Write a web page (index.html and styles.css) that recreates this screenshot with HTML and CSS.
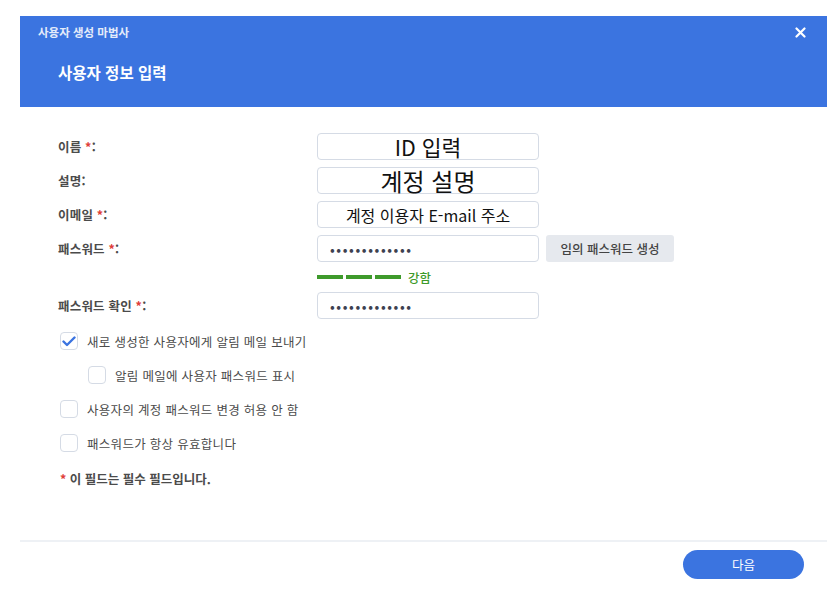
FILE: index.html
```html
<!DOCTYPE html>
<html lang="ko">
<head>
    <meta charset="UTF-8">
    <meta name="viewport" content="width=device-width, initial-scale=1.0">
    <title>사용자 생성 마법사</title>
    <link rel="stylesheet" href="styles.css">
</head>
<body>
    <div class="dialog">

        <div class="header">
            <div class="title-bar">
                <span class="title">사용자 생성 마법사</span>
                <span class="close">
                    <svg width="11" height="11" viewBox="0 0 11 11">
                        <path d="M1.5 1.5 L9.5 9.5 M9.5 1.5 L1.5 9.5" stroke="#fff" stroke-width="2.2" stroke-linecap="round"/>
                    </svg>
                </span>
            </div>
            <h2 class="step">사용자 정보 입력</h2>
        </div>

        <div class="body">
            <div class="row">
                <label>이름 <span class="req">*</span>:</label>
                <div class="field big">ID 입력</div>
            </div>
            <div class="row">
                <label>설명:</label>
                <div class="field bigger">계정 설명</div>
            </div>
            <div class="row">
                <label>이메일 <span class="req">*</span>:</label>
                <div class="field mid">계정 이용자 E-mail 주소</div>
            </div>
            <div class="row">
                <label>패스워드 <span class="req">*</span>:</label>
                <div class="field pw">•••••••••••••</div>
                <button class="gen">임의 패스워드 생성</button>
            </div>
            <div class="strength">
                <span class="seg"></span><span class="seg"></span><span class="seg"></span>
                <span class="strong">강함</span>
            </div>
            <div class="row">
                <label>패스워드 확인 <span class="req">*</span>:</label>
                <div class="field pw">•••••••••••••</div>
            </div>

            <div class="checks">
                <div class="check">
                    <span class="box checked">
                        <svg width="14" height="11" viewBox="0 0 14 11">
                            <path d="M1.5 5.5 L5 9 L12.5 1.5" fill="none" stroke="#3b74e0" stroke-width="2.4" stroke-linecap="round" stroke-linejoin="round"/>
                        </svg>
                    </span>
                    <span>새로 생성한 사용자에게 알림 메일 보내기</span>
                </div>
                <div class="check sub">
                    <span class="box"></span>
                    <span>알림 메일에 사용자 패스워드 표시</span>
                </div>
                <div class="check">
                    <span class="box"></span>
                    <span>사용자의 계정 패스워드 변경 허용 안 함</span>
                </div>
                <div class="check">
                    <span class="box"></span>
                    <span>패스워드가 항상 유효합니다</span>
                </div>
            </div>

            <p class="note"><span class="req">*</span> 이 필드는 필수 필드입니다.</p>
        </div>

        <div class="footer">
            <button class="next">다음</button>
        </div>
    </div>
</body>
</html>
```

FILE: styles.css
```css
body {
    margin: 0;
    padding: 16px 12px 0 20px;
    background: #fff;
    font-family: "Noto Sans CJK KR", "Noto Sans", sans-serif;
}

.dialog {
    width: 807px;
    background: #fff;
}

.header {
    height: 91px;
    background: #3b74e0;
    color: #fff;
    box-sizing: border-box;
    padding: 6px 0 0 18px;
}
.title-bar {
    display: flex;
    justify-content: space-between;
    align-items: center;
    height: 20px;
}
.title {
    font-size: 11.5px;
    font-weight: bold;
    color: #e4ebfa;
}
.close {
    display: flex;
    margin-right: 21px;
}
.step {
    margin: 19px 0 0 20px;
    font-size: 15.5px;
    font-weight: bold;
}

.body {
    padding: 26px 0 0 38px;
    height: 433px;
    box-sizing: border-box;
}

.row {
    display: flex;
    align-items: center;
    margin-bottom: 7px;
}
.row label {
    width: 259px;
    font-size: 12.5px;
    font-weight: bold;
    letter-spacing: 0.2px;
    color: #4b4b4b;
}
.req {
    color: #e0403a;
}

.field {
    width: 222px;
    height: 27px;
    box-sizing: border-box;
    border: 1px solid #d5dbe5;
    border-radius: 4px;
    display: flex;
    align-items: center;
    justify-content: center;
    color: #111;
    line-height: 1;
}
.field.big { font-size: 21.5px; }
.field.bigger { font-size: 24px; }
.field.mid { font-size: 16px; }
.field.pw {
    justify-content: flex-start;
    padding-left: 12px;
    font-size: 14px;
    letter-spacing: 1.6px;
    color: #3d4150;
}

.gen {
    margin-left: 7px;
    height: 27px;
    width: 128px;
    border: none;
    border-radius: 3px;
    background: #e6e9ee;
    color: #444;
    font-family: inherit;
    font-size: 12.5px;
    font-weight: 500;
}

.strength {
    display: flex;
    align-items: center;
    margin: 0 0 7px 259px;
    height: 16px;
}
.seg {
    width: 26px;
    height: 4px;
    background: #3e9a2b;
    margin-right: 3px;
}
.strong {
    margin-left: 4px;
    font-size: 12.5px;
    font-weight: 500;
    color: #3e9a2b;
}

.checks {
    margin-top: 13px;
}
.check {
    display: flex;
    align-items: center;
    height: 18px;
    margin-bottom: 16px;
    padding-left: 2px;
    font-size: 12.5px;
    letter-spacing: 0.3px;
    color: #4b4b4b;
}
.check.sub {
    padding-left: 30px;
}
.box {
    width: 18px;
    height: 18px;
    box-sizing: border-box;
    border: 1px solid #d5dbe5;
    border-radius: 4px;
    margin-right: 9px;
    display: flex;
    align-items: center;
    justify-content: center;
}

.note {
    margin: 17px 0 0 2px;
    font-size: 12.5px;
    font-weight: bold;
    color: #4b4b4b;
}

.footer {
    border-top: 2px solid #eef1f5;
    display: flex;
    justify-content: flex-end;
    padding: 8px 23px 0 0;
}
.next {
    width: 121px;
    height: 29px;
    border: none;
    border-radius: 15px;
    background: #3b74e0;
    color: #fff;
    font-family: inherit;
    font-size: 12.5px;
}
```
